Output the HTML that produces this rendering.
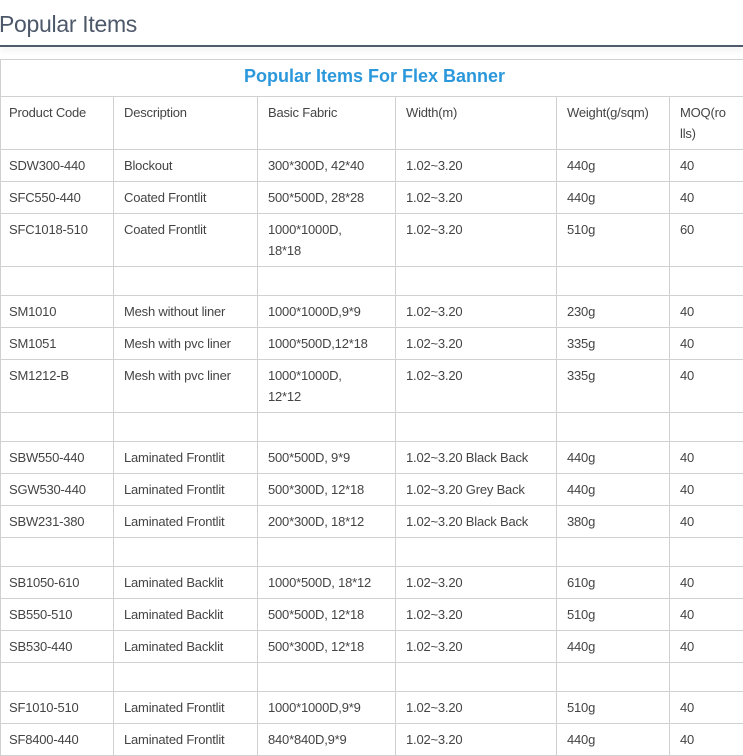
<!DOCTYPE html>
<html><head><meta charset="utf-8"><style>
html,body{margin:0;padding:0;background:#fff;width:743px;height:756px;overflow:hidden;font-family:"Liberation Sans",sans-serif;}
h1{position:absolute;left:-1px;top:11px;margin:0;font-weight:normal;font-size:23px;color:#4d5869;letter-spacing:-0.3px;}
.line{position:absolute;left:0;top:45px;width:743px;height:2px;background:#4f5a6a;box-shadow:0 3px 6px rgba(0,0,0,0.12);}
table{position:absolute;left:0;top:59px;border-collapse:collapse;table-layout:fixed;width:750px;}
td{border:1px solid #d0d0d0;font-size:13px;color:#444;vertical-align:top;padding:5px 8px 0 10px;line-height:21px;box-sizing:border-box;letter-spacing:-0.2px;}
td:first-child{padding-left:8px;}
td.t{text-align:center;color:#2b98dc;font-weight:bold;font-size:18px;padding-top:6px;padding-right:10px;letter-spacing:0;}
</style></head><body>
<h1>Popular Items</h1><div class="line"></div>
<table>
<colgroup><col style="width:113px"><col style="width:144px"><col style="width:138px"><col style="width:161px"><col style="width:113px"><col style="width:81px"></colgroup>
<tr style="height:37px"><td class="t" colspan="6">Popular Items For Flex Banner</td></tr>
<tr style="height:53px"><td>Product Code</td><td>Description</td><td>Basic Fabric</td><td>Width(m)</td><td>Weight(g/sqm)</td><td>MOQ(ro<br>lls)</td></tr>
<tr style="height:32px"><td>SDW300-440</td><td>Blockout</td><td>300*300D, 42*40</td><td>1.02~3.20</td><td>440g</td><td>40</td></tr>
<tr style="height:32px"><td>SFC550-440</td><td>Coated Frontlit</td><td>500*500D, 28*28</td><td>1.02~3.20</td><td>440g</td><td>40</td></tr>
<tr style="height:53px"><td>SFC1018-510</td><td>Coated Frontlit</td><td>1000*1000D,<br>18*18</td><td>1.02~3.20</td><td>510g</td><td>60</td></tr>
<tr style="height:29px"><td></td><td></td><td></td><td></td><td></td><td></td></tr>
<tr style="height:32px"><td>SM1010</td><td>Mesh without liner</td><td>1000*1000D,9*9</td><td>1.02~3.20</td><td>230g</td><td>40</td></tr>
<tr style="height:32px"><td>SM1051</td><td>Mesh with pvc liner</td><td>1000*500D,12*18</td><td>1.02~3.20</td><td>335g</td><td>40</td></tr>
<tr style="height:53px"><td>SM1212-B</td><td>Mesh with pvc liner</td><td>1000*1000D,<br>12*12</td><td>1.02~3.20</td><td>335g</td><td>40</td></tr>
<tr style="height:29px"><td></td><td></td><td></td><td></td><td></td><td></td></tr>
<tr style="height:32px"><td>SBW550-440</td><td>Laminated Frontlit</td><td>500*500D, 9*9</td><td>1.02~3.20 Black Back</td><td>440g</td><td>40</td></tr>
<tr style="height:32px"><td>SGW530-440</td><td>Laminated Frontlit</td><td>500*300D, 12*18</td><td>1.02~3.20 Grey Back</td><td>440g</td><td>40</td></tr>
<tr style="height:32px"><td>SBW231-380</td><td>Laminated Frontlit</td><td>200*300D, 18*12</td><td>1.02~3.20 Black Back</td><td>380g</td><td>40</td></tr>
<tr style="height:29px"><td></td><td></td><td></td><td></td><td></td><td></td></tr>
<tr style="height:32px"><td>SB1050-610</td><td>Laminated Backlit</td><td>1000*500D, 18*12</td><td>1.02~3.20</td><td>610g</td><td>40</td></tr>
<tr style="height:32px"><td>SB550-510</td><td>Laminated Backlit</td><td>500*500D, 12*18</td><td>1.02~3.20</td><td>510g</td><td>40</td></tr>
<tr style="height:32px"><td>SB530-440</td><td>Laminated Backlit</td><td>500*300D, 12*18</td><td>1.02~3.20</td><td>440g</td><td>40</td></tr>
<tr style="height:29px"><td></td><td></td><td></td><td></td><td></td><td></td></tr>
<tr style="height:32px"><td>SF1010-510</td><td>Laminated Frontlit</td><td>1000*1000D,9*9</td><td>1.02~3.20</td><td>510g</td><td>40</td></tr>
<tr style="height:32px"><td>SF8400-440</td><td>Laminated Frontlit</td><td>840*840D,9*9</td><td>1.02~3.20</td><td>440g</td><td>40</td></tr>
</table>
</body></html>
